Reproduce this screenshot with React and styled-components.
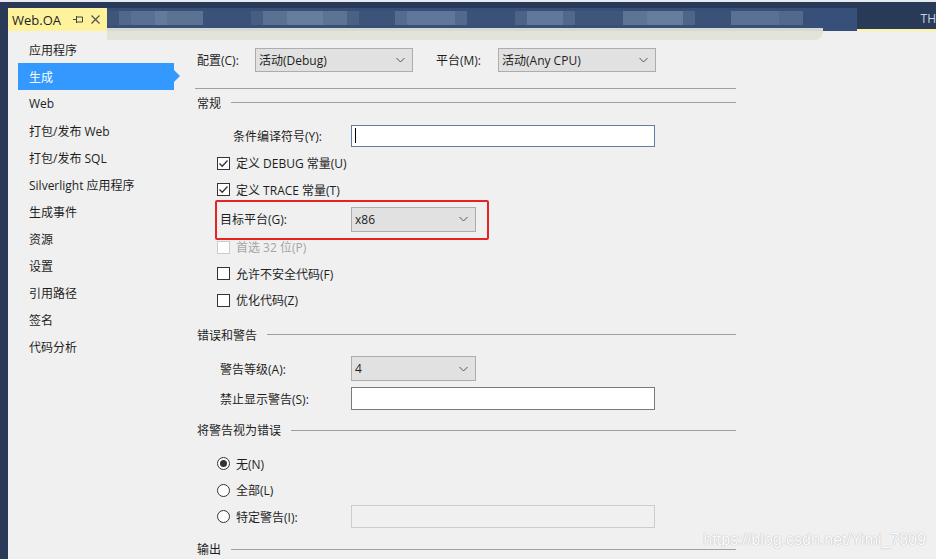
import React from "react";
import styled, { createGlobalStyle } from "styled-components";

const Global = createGlobalStyle`
  html, body { margin: 0; padding: 0; background: #f0f0f0; }
  body { font-family: "Open Sans", "Noto Sans CJK SC", sans-serif; font-size: 12px; color: #1e1e1e; }
  * { box-sizing: border-box; }
`;

const Page = styled.div`
  position: relative;
  width: 936px;
  height: 559px;
  overflow: hidden;
  background: #f0f0f0;
  display: flex;
  flex-direction: column;
`;

const TopBar = styled.div`
  height: 31px;
  flex: none;
  background: #293a58;
  border-top: 2px solid #e6e9ef;
  display: flex;
  align-items: flex-end;
  padding-left: 8px;
`;

const ActiveTab = styled.div`
  height: 23px;
  width: 99px;
  background: #fff29d;
  display: flex;
  align-items: center;
  padding-left: 4px;
  gap: 7px;
  font-size: 13px;
  color: #1e1e1e;
`;

const TabTitle = styled.span`
  margin-right: 5px;
`;

const TabStrip = styled.div`
  height: 23px;
  width: 750px;
  background: #36507a;
  display: flex;
  align-items: flex-start;
  padding-top: 3px;
`;

const BlurBlock = styled.div`
  height: 14px;
  background: ${(p) => p.$c};
  width: ${(p) => p.$w}px;
  flex: none;
`;

const RestStrip = styled.div`
  flex: 1;
  height: 23px;
  border-bottom: 2px solid #fff29d;
  display: flex;
  justify-content: flex-end;
  align-items: center;
  color: #c8d2e2;
  font-size: 12px;
  overflow: hidden;
  white-space: nowrap;
`;

const Smear = styled.div`
  position: absolute;
  left: 107px;
  top: 28px;
  width: 716px;
  height: 12px;
  background: #e2e2d7;
  border-radius: 0 0 8px 0;
  opacity: 0.95;
`;

const Body = styled.div`
  flex: 1;
  display: flex;
  min-height: 0;
`;

const LeftEdge = styled.div`
  width: 8px;
  flex: none;
  background: #293a58;
`;

const Sidebar = styled.nav`
  width: 172px;
  flex: none;
  padding-top: 5px;
  padding-left: 10px;
  display: flex;
  flex-direction: column;
`;

const NavItem = styled.div`
  position: relative;
  height: 27px;
  width: 156px;
  display: flex;
  align-items: center;
  padding-left: 11px;
  white-space: nowrap;
  background: ${(p) => (p.$active ? "#3399ff" : "transparent")};
  color: ${(p) => (p.$active ? "#ffffff" : "#1e1e1e")};
  &::after {
    content: "";
    display: ${(p) => (p.$active ? "block" : "none")};
    position: absolute;
    right: -6px;
    top: 7px;
    border-left: 6px solid #3399ff;
    border-top: 6px solid transparent;
    border-bottom: 6px solid transparent;
  }
`;

const Content = styled.main`
  flex: none;
  width: 541px;
  margin-left: 15px;
  display: flex;
  flex-direction: column;
`;

const ConfigRow = styled.div`
  margin-top: 17px;
  height: 24px;
  display: flex;
  align-items: center;
  padding-left: 2px;
`;

const ConfigLabel = styled.span`
  width: ${(p) => p.$w}px;
  flex: none;
  white-space: nowrap;
`;

const SelectBox = styled.div`
  width: ${(p) => p.$w}px;
  height: ${(p) => p.$h || 25}px;
  flex: none;
  background: #e1e1e1;
  border: 1px solid #adadad;
  display: flex;
  align-items: center;
  justify-content: space-between;
  padding: 0 7px 0 3px;
  margin-right: ${(p) => p.$mr || 0}px;
  white-space: nowrap;
`;

const Divider = styled.div`
  margin-top: 16px;
  height: 1px;
  background: #a0a0a0;
`;

const SectionHeader = styled.div`
  margin-top: ${(p) => p.$mt}px;
  height: 20px;
  display: flex;
  align-items: center;
  gap: 10px;
  padding-left: 2px;
  white-space: nowrap;
  &::after {
    content: "";
    flex: 1;
    height: 1px;
    background: #a0a0a0;
  }
`;

const FieldRow = styled.div`
  position: relative;
  margin-top: ${(p) => p.$mt || 0}px;
  height: ${(p) => p.$h || 27}px;
  padding-top: ${(p) => p.$pt || 0}px;
  display: flex;
  align-items: center;
`;

const FieldLabel = styled.span`
  width: 156px;
  flex: none;
  padding-left: ${(p) => p.$indent}px;
  white-space: nowrap;
`;

const TextInput = styled.div`
  width: 304px;
  height: ${(p) => p.$h || 23}px;
  flex: none;
  background: ${(p) => (p.$disabled ? "#f0f0f0" : "#ffffff")};
  border: 1px solid ${(p) => (p.$focus ? "#5b7fa5" : p.$disabled ? "#cccccc" : "#7a7a7a")};
  display: flex;
  align-items: center;
  padding-left: 3px;
`;

const Caret = styled.span`
  width: 1px;
  height: 15px;
  background: #000;
`;

const CheckRow = styled.div`
  height: 27px;
  margin-top: ${(p) => p.$mt || 0}px;
  display: flex;
  align-items: center;
  padding-left: 22px;
  gap: 6px;
  color: ${(p) => (p.$disabled ? "#a6a6a6" : "#1e1e1e")};
  white-space: nowrap;
`;

const CheckBox = styled.span`
  width: 13px;
  height: 13px;
  flex: none;
  border: 1px solid ${(p) => (p.$disabled ? "#cccccc" : "#333333")};
  background: #ffffff;
  display: flex;
  align-items: center;
  justify-content: center;
`;

const Radio = styled.span`
  width: 13px;
  height: 13px;
  flex: none;
  border: 1px solid #333333;
  border-radius: 50%;
  background: #ffffff;
  display: flex;
  align-items: center;
  justify-content: center;
  &::after {
    content: "";
    display: ${(p) => (p.$checked ? "block" : "none")};
    width: 7px;
    height: 7px;
    border-radius: 50%;
    background: #333333;
  }
`;

const RadioLabel = styled.span`
  width: 109px;
  flex: none;
`;

const RedBox = styled.div`
  position: absolute;
  left: 20px;
  top: -3px;
  width: 274px;
  height: 40px;
  border: 2px solid #e62323;
  border-radius: 2px;
  pointer-events: none;
`;

const Watermark = styled.div`
  position: absolute;
  right: 10px;
  bottom: 10px;
  font-family: "Liberation Sans", Arial, sans-serif;
  font-size: 16px;
  color: #ffffff;
  text-shadow: 0 0 1px #b5b5b5, 0 0 1px #b5b5b5;
  opacity: 0.9;
`;

const Chevron = () => (
  <svg width="9" height="6" viewBox="0 0 9 6">
    <path d="M0.5 1 L4.5 5 L8.5 1" fill="none" stroke="#555" strokeWidth="1" />
  </svg>
);

const Check = () => (
  <svg width="11" height="11" viewBox="0 0 11 11">
    <path d="M1.5 5.5 L4.2 8.3 L9.5 2.5" fill="none" stroke="#333" strokeWidth="1.3" />
  </svg>
);

const PinIcon = () => (
  <svg width="11" height="9" viewBox="0 0 11 9">
    <path d="M0 4.5 H3 M3.5 1 V8 M3.5 2 H9.5 V7 H3.5" fill="none" stroke="#444" strokeWidth="1" />
  </svg>
);

const CloseIcon = () => (
  <svg width="9" height="9" viewBox="0 0 9 9">
    <path d="M0.5 0.5 L8.5 8.5 M8.5 0.5 L0.5 8.5" stroke="#555" strokeWidth="1.3" />
  </svg>
);

const navItems = [
  "应用程序",
  "生成",
  "Web",
  "打包/发布 Web",
  "打包/发布 SQL",
  "Silverlight 应用程序",
  "生成事件",
  "资源",
  "设置",
  "引用路径",
  "签名",
  "代码分析",
];

const blur = [
  ["#3f5679", 12], ["#52688a", 12], ["#5a7092", 24], ["#647a9a", 12], ["#5c7293", 36],
  ["#3a5277", 48], ["#475e82", 12], ["#5b7192", 24], ["#677d9c", 36], ["#5d7394", 24],
  ["#4a6184", 12], ["#3c5479", 36], ["#566c8e", 12], ["#60769a", 48], ["#53698c", 12],
  ["#3a5277", 48], ["#4c6385", 12], ["#62789a", 36], ["#52688b", 12], ["#3e567a", 48],
  ["#5e7495", 24], ["#677d9d", 36], ["#4e6588", 12], ["#3a5277", 36], ["#5b7193", 48],
  ["#53698c", 24],
];

export default function App() {
  return (
    <Page>
      <Global />
      <TopBar>
        <ActiveTab>
          <TabTitle>Web.OA</TabTitle>
          <PinIcon />
          <CloseIcon />
        </ActiveTab>
        <TabStrip>
          {blur.map(([c, w], i) => (
            <BlurBlock key={i} $c={c} $w={w} />
          ))}
        </TabStrip>
        <RestStrip>TH</RestStrip>
      </TopBar>
      <Body>
        <LeftEdge />
        <Sidebar>
          {navItems.map((t) => (
            <NavItem key={t} $active={t === "生成"}>
              {t}
            </NavItem>
          ))}
        </Sidebar>
        <Content>
          <ConfigRow>
            <ConfigLabel $w={58}>配置(C):</ConfigLabel>
            <SelectBox $w={158} $h={24} $mr={23}>
              活动(Debug)
              <Chevron />
            </SelectBox>
            <ConfigLabel $w={62}>平台(M):</ConfigLabel>
            <SelectBox $w={158} $h={24}>
              活动(Any CPU)
              <Chevron />
            </SelectBox>
          </ConfigRow>
          <Divider />
          <SectionHeader $mt={4}>常规</SectionHeader>
          <FieldRow $mt={12} $h={22}>
            <FieldLabel $indent={38}>条件编译符号(Y):</FieldLabel>
            <TextInput $focus $h={22}>
              <Caret />
            </TextInput>
          </FieldRow>
          <CheckRow $mt={3}>
            <CheckBox>
              <Check />
            </CheckBox>
            定义 DEBUG 常量(U)
          </CheckRow>
          <CheckRow>
            <CheckBox>
              <Check />
            </CheckBox>
            定义 TRACE 常量(T)
          </CheckRow>
          <FieldRow $h={31} $pt={2}>
            <FieldLabel $indent={25}>目标平台(G):</FieldLabel>
            <SelectBox $w={125}>
              x86
              <Chevron />
            </SelectBox>
            <RedBox />
          </FieldRow>
          <CheckRow $disabled>
            <CheckBox $disabled />
            首选 32 位(P)
          </CheckRow>
          <CheckRow>
            <CheckBox />
            允许不安全代码(F)
          </CheckRow>
          <CheckRow>
            <CheckBox />
            优化代码(Z)
          </CheckRow>
          <SectionHeader $mt={11}>错误和警告</SectionHeader>
          <FieldRow $mt={12} $h={25}>
            <FieldLabel $indent={25}>警告等级(A):</FieldLabel>
            <SelectBox $w={125}>
              4
              <Chevron />
            </SelectBox>
          </FieldRow>
          <FieldRow $mt={6} $h={23}>
            <FieldLabel $indent={25}>禁止显示警告(S):</FieldLabel>
            <TextInput />
          </FieldRow>
          <SectionHeader $mt={10}>将警告视为错误</SectionHeader>
          <CheckRow $mt={10}>
            <Radio $checked />
            无(N)
          </CheckRow>
          <CheckRow>
            <Radio />
            全部(L)
          </CheckRow>
          <CheckRow>
            <Radio />
            <RadioLabel>特定警告(I):</RadioLabel>
            <TextInput $disabled $h={23} />
          </CheckRow>
          <SectionHeader $mt={9}>输出</SectionHeader>
        </Content>
      </Body>
      <Smear />
      <Watermark>https://blog.csdn.net/Yimi_7809</Watermark>
    </Page>
  );
}
